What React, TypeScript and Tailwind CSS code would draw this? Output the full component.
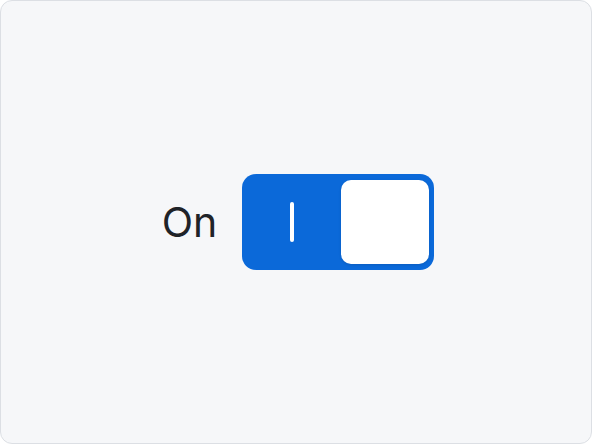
import React, { useState } from "react";

export default function App() {
  const [on, setOn] = useState(true);

  return (
    <div className="h-[444px] w-[592px] bg-white">
      <div className="flex h-full w-full items-center justify-center gap-[25px] rounded-xl border border-[#dcdfe4] bg-[#f6f7f9] pl-[4px] font-[Inter,sans-serif]">
        <span className="text-[41px] leading-none text-[#1f2328]">
          {on ? "On" : "Off"}
        </span>
        <button
          type="button"
          role="switch"
          aria-checked={on}
          onClick={() => setOn(!on)}
          className="flex h-[96px] w-[192px] items-center rounded-[14px] bg-[#0b69d9] py-[6px] pr-[5px]"
        >
          <span className="flex flex-1 items-center justify-center">
            <span className="h-[40px] w-[4px] rounded-full bg-white" />
          </span>
          <span className="h-[84px] w-[88px] rounded-[10px] bg-white shadow-[0_1px_3px_rgba(0,0,0,0.12)]" />
        </button>
      </div>
    </div>
  );
}
